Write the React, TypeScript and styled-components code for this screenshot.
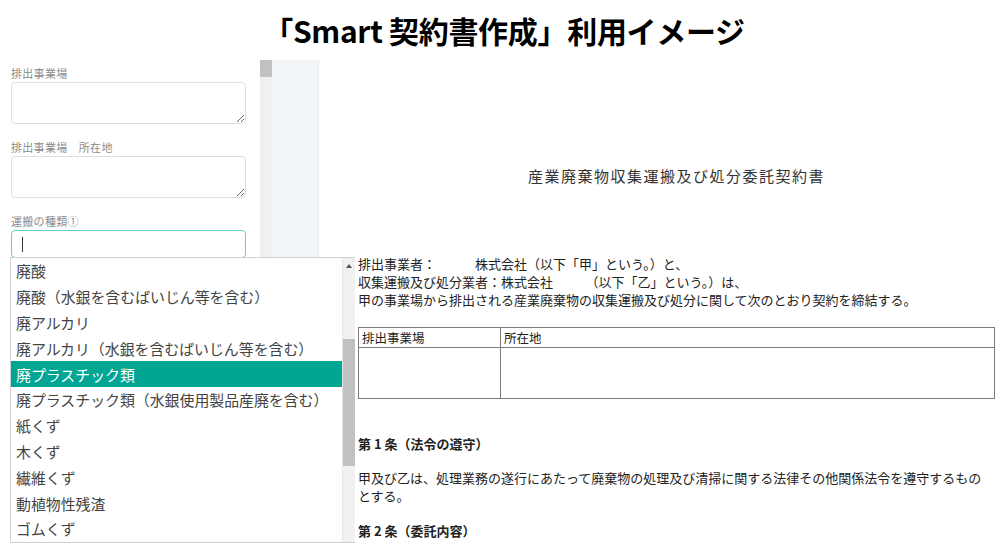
import styled, { createGlobalStyle } from 'styled-components';

const GlobalStyle = createGlobalStyle`
  html, body {
    margin: 0;
    padding: 0;
    background: #fff;
  }
  body {
    font-family: "Noto Sans CJK JP", "Noto Sans", sans-serif;
    color: #222;
  }
  * { box-sizing: border-box; }
`;

const FONT = `"Noto Sans CJK JP", "Noto Sans", sans-serif`;

const Page = styled.div`
  width: 1008px;
  height: 555px;
  overflow: hidden;
  background: #fff;
`;

const Header = styled.h1`
  margin: 0;
  height: 58px;
  display: flex;
  align-items: center;
  justify-content: center;
  padding-top: 1px;
  font-family: ${FONT};
  font-weight: 700;
  font-size: 30px;
  letter-spacing: -0.3px;
  color: #000;
`;

const Main = styled.div`
  display: flex;
  height: 485px;
  overflow: hidden;
`;

const FormPanel = styled.div`
  width: 260px;
  padding: 8px 14px 0 11px;
  display: flex;
  flex-direction: column;
  background: #fff;
`;

const Field = styled.div`
  display: flex;
  flex-direction: column;
  gap: 2px;
  margin-bottom: 16px;
`;

const Label = styled.label`
  font-family: ${FONT};
  font-size: 11px;
  line-height: 14px;
  color: #8a8a8a;
  letter-spacing: 0.3px;
`;

const TextArea = styled.textarea`
  width: 235px;
  height: 42px;
  border: 1px solid #dcdfe4;
  border-radius: 4px;
  padding: 6px 8px;
  font-family: ${FONT};
  font-size: 12px;
  outline: none;
  resize: vertical;
  display: block;
`;

const ComboWrap = styled.div`
  position: relative;
  width: 235px;
`;

const ComboInput = styled.div`
  height: 28px;
  border: 1px solid #5fd2c3;
  border-radius: 4px;
  display: flex;
  align-items: center;
  padding-left: 10px;
`;

const Caret = styled.span`
  width: 1px;
  height: 15px;
  background: #333;
`;

const Menu = styled.div`
  position: absolute;
  top: 27px;
  left: -1px;
  width: 345px;
  height: 286px;
  background: #fff;
  border: 1px solid #cfcfcf;
  border-right: none;
  display: flex;
  z-index: 5;
`;

const MenuList = styled.ul`
  list-style: none;
  margin: 0;
  padding: 0;
  flex: 1;
`;

const MenuItem = styled.li<{ $active?: boolean }>`
  height: 25.8px;
  display: flex;
  align-items: center;
  padding-left: 5px;
  font-family: ${FONT};
  font-size: 14.9px;
  white-space: nowrap;
  color: ${({ $active }) => ($active ? '#fff' : '#444')};
  background: ${({ $active }) => ($active ? '#00a593' : 'transparent')};
`;

const MenuScroll = styled.div`
  width: 13px;
  background: #f1f1f1;
  border-left: 1px solid #e6e6e6;
  display: flex;
  flex-direction: column;
  align-items: center;
`;

const ScrollArrow = styled.div`
  margin-top: 6px;
  width: 0;
  height: 0;
  border-left: 3px solid transparent;
  border-right: 3px solid transparent;
  border-bottom: 4px solid #555;
`;

const MenuThumb = styled.div`
  margin-top: 71px;
  width: 12px;
  height: 127px;
  background: #c1c1c1;
`;

const PanelScroll = styled.div`
  width: 12px;
  background: #f0f0f0;
  margin-top: 2px;
`;

const PanelThumb = styled.div`
  height: 17px;
  background: #c1c1c1;
`;

const Gutter = styled.div`
  width: 47px;
  margin-top: 2px;
  background: #f3f6f9;
  border-right: 1px solid #e9eef3;
`;

const Doc = styled.div`
  margin-left: 39px;
  width: 637px;
  padding-top: 108px;
  font-family: ${FONT};
  font-size: 13px;
  line-height: 18px;
  color: #222;
`;

const DocTitle = styled.h2`
  margin: 0;
  text-align: center;
  font-family: ${FONT};
  font-weight: 400;
  font-size: 15px;
  line-height: 20px;
  letter-spacing: 1.5px;
  color: #333;
`;

const Para = styled.p<{ $top: number }>`
  margin: ${({ $top }) => $top}px 0 0;
  white-space: pre;
`;

const Wrap = styled.p<{ $top: number }>`
  margin: ${({ $top }) => $top}px 0 0;
  max-width: 628px;
`;

const Article = styled.h3<{ $top: number }>`
  margin: ${({ $top }) => $top}px 0 0;
  font-size: 13px;
  line-height: 18px;
  font-weight: 700;
  color: #222;
`;

const Table = styled.table`
  margin-top: 18px;
  width: 637px;
  border-collapse: collapse;
  border: 1px solid #7d7d7d;
`;

const Cell = styled.td<{ $w?: number; $h: number }>`
  border: 1px solid #7d7d7d;
  padding: 0 3px;
  height: ${({ $h }) => $h}px;
  width: ${({ $w }) => ($w ? `${$w}px` : 'auto')};
  font-size: 12.5px;
  vertical-align: middle;
`;

const wasteTypes = [
  '廃酸',
  '廃酸（水銀を含むばいじん等を含む）',
  '廃アルカリ',
  '廃アルカリ（水銀を含むばいじん等を含む）',
  '廃プラスチック類',
  '廃プラスチック類（水銀使用製品産廃を含む）',
  '紙くず',
  '木くず',
  '繊維くず',
  '動植物性残渣',
  'ゴムくず',
];

export default function App() {
  return (
    <Page>
      <GlobalStyle />
      <Header>「Smart 契約書作成」利用イメージ</Header>
      <Main>
        <FormPanel>
          <Field>
            <Label>排出事業場</Label>
            <TextArea />
          </Field>
          <Field>
            <Label>排出事業場　所在地</Label>
            <TextArea />
          </Field>
          <Field>
            <Label>運搬の種類①</Label>
            <ComboWrap>
              <ComboInput>
                <Caret />
              </ComboInput>
              <Menu>
                <MenuList>
                  {wasteTypes.map((w) => (
                    <MenuItem key={w} $active={w === '廃プラスチック類'}>
                      {w}
                    </MenuItem>
                  ))}
                </MenuList>
                <MenuScroll>
                  <ScrollArrow />
                  <MenuThumb />
                </MenuScroll>
              </Menu>
            </ComboWrap>
          </Field>
        </FormPanel>
        <PanelScroll>
          <PanelThumb />
        </PanelScroll>
        <Gutter />
        <Doc>
          <DocTitle>産業廃棄物収集運搬及び処分委託契約書</DocTitle>
          <Para $top={69}>
            {'排出事業者：　　　株式会社（以下「甲」という。）と、\n収集運搬及び処分業者：株式会社　　　（以下「乙」という。）は、\n甲の事業場から排出される産業廃棄物の収集運搬及び処分に関して次のとおり契約を締結する。'}
          </Para>
          <Table>
            <tbody>
              <tr>
                <Cell $w={142} $h={20}>排出事業場</Cell>
                <Cell $h={20}>所在地</Cell>
              </tr>
              <tr>
                <Cell $w={142} $h={51} />
                <Cell $h={51} />
              </tr>
            </tbody>
          </Table>
          <Article $top={36}>第 1 条（法令の遵守）</Article>
          <Wrap $top={16}>
            甲及び乙は、処理業務の遂行にあたって廃棄物の処理及び清掃に関する法律その他関係法令を遵守するものとする。
          </Wrap>
          <Article $top={17}>第 2 条（委託内容）</Article>
        </Doc>
      </Main>
    </Page>
  );
}
